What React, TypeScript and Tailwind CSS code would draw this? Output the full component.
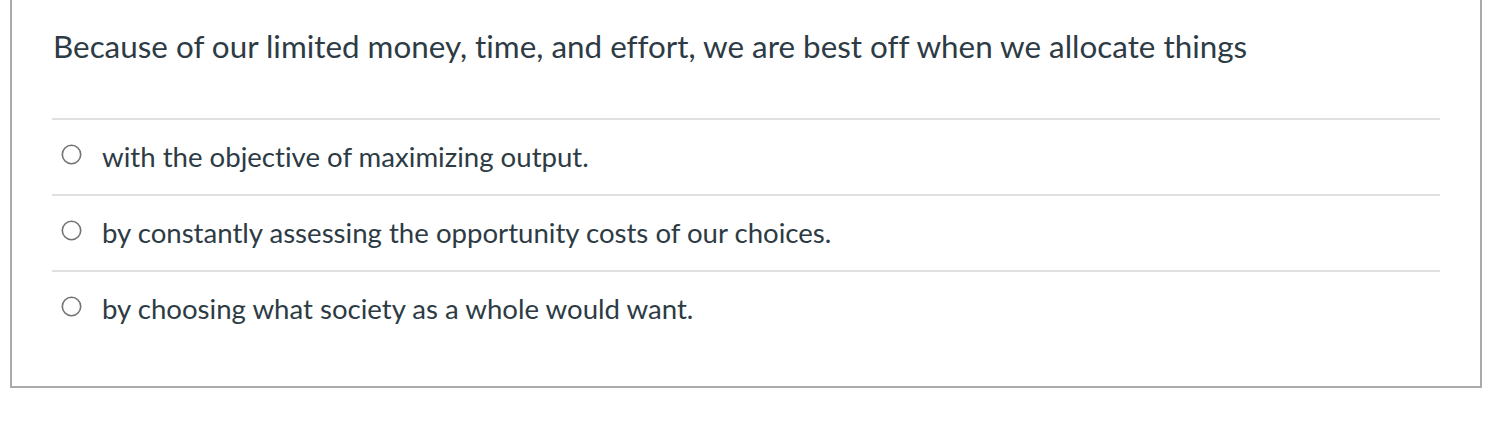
const options = [
  'with the objective of maximizing output.',
  'by constantly assessing the opportunity costs of our choices.',
  'by choosing what society as a whole would want.',
]

export default function App() {
  return (
    <div className="w-[1490px] h-[422px] bg-white font-['Lato',sans-serif] text-[#2d3b45] [font-variant-ligatures:none]">
      <div className="ml-[10px] w-[1472px] border-x-2 border-b-2 border-[#aaaaaa] px-10 pb-10">
        <div className="h-[118px] pt-[24px] pl-px text-[31.4px] leading-[44px]">
          Because of our limited money, time, and effort, we are best off when we allocate things
        </div>
        {options.map((opt) => (
          <div key={opt} className="flex h-[76px] items-center border-t-2 border-[#e0e0e0] pl-[9px] text-[27.6px]">
            <svg viewBox="0 0 21 21" className="mr-[20px] mb-[5px] h-[21px] w-[21px] shrink-0">
              <circle cx="10.5" cy="10.5" r="9.2" fill="white" stroke="#737373" strokeWidth="1.6" />
            </svg>
            <span>{opt}</span>
          </div>
        ))}
      </div>
    </div>
  )
}
